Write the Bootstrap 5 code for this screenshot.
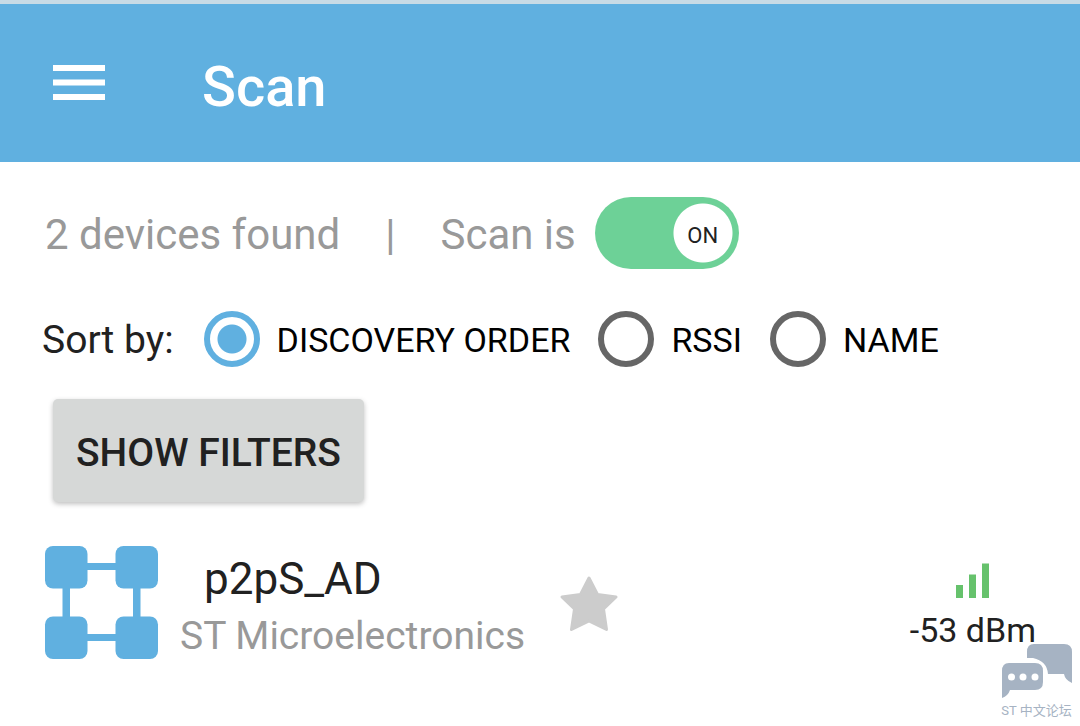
<!DOCTYPE html>
<html lang="en">
<head>
<meta charset="utf-8">
<meta name="viewport" content="width=device-width, initial-scale=1">
<title>Scan</title>
<link href="https://cdn.jsdelivr.net/npm/bootstrap@5.3.0/dist/css/bootstrap.min.css" rel="stylesheet">
<style>
  :root { --scan-blue: #60b0e0; --scan-ink: #212121; --scan-grey: #999; }
  body { font-family: Roboto, "Noto Sans CJK SC", sans-serif; color: var(--scan-ink); background: #fff; }
  .app-bar { background: var(--scan-blue); border-top: 4px solid #c8dbe6; padding: 34px 52px 26px; gap: 96px; }
  .app-title { font-size: 56px; line-height: 98px; font-weight: 500; }
  .menu-btn svg, .device svg, .forum svg { display: block; }
  .screen { padding: 35px 44px 0 42px; }
  .status-row { padding-left: 3px; font-size: 42px; line-height: 72px; color: var(--scan-grey); }
  .status-row > span, .status-row > label { padding-top: 2px; margin-bottom: -2px; }
  .status-row .divider { padding-left: 45px; padding-right: 45px; }
  .scan-switch { width: 144px; height: 72px; margin-left: 19px; }
  .scan-switch .form-check-input {
    width: 144px; height: 72px; margin: 0; border: 0; border-radius: 36px; background-color: #ccc;
    background-image: radial-gradient(circle at 36px 36px, #fff 29px, transparent 30px);
    background-size: 100% 100%; background-position: 0 0;
  }
  .scan-switch .form-check-input:checked {
    background-color: #6dd197;
    background-image: radial-gradient(circle at 108px 36px, #fff 29px, transparent 30px);
  }
  .scan-switch .state { right: 6px; top: 6px; width: 60px; font-size: 22px; line-height: 66px; color: var(--scan-ink); pointer-events: none; }
  .sort-row { margin-top: 41px; gap: 28px; line-height: 56px; }
  .sort-title { font-size: 39px; padding-top: 1px; padding-right: 2px; }
  .sort-option { font-size: 34px; color: #000; gap: 17px; }
  .sort-option label { padding-top: 2px; }
  .sort-option .form-check-input { width: 56px; height: 56px; margin: 0; border: 6px solid #666; background-color: #fff; }
  .sort-option .form-check-input:checked {
    border-color: var(--scan-blue);
    background-image: radial-gradient(circle, var(--scan-blue) 14px, transparent 15px);
  }
  .filter-btn { margin: 31px 0 0 11px; padding: 5px 23px 0; border: 0; border-radius: 5px; background: #d6d8d7; color: var(--scan-ink);
    font-size: 39px; line-height: 98px; font-weight: 500; box-shadow: 0 2px 5px rgba(0, 0, 0, .25); }
  .device { margin-top: 43px; padding-left: 2px; }
  .device-name { font-size: 44px; line-height: 58px; padding-left: 24px; font-weight: 400; }
  .device-maker { font-size: 39px; line-height: 56px; color: var(--scan-grey); }
  .device-text { margin-left: 21px; margin-top: 5px; }
  .star-btn { margin-left: 34px; margin-top: 28px; }
  .signal { margin-top: 17px; font-size: 34px; line-height: 40px; }
  .signal svg { margin-bottom: 12px; }
  .forum { right: 8px; bottom: 5px; color: #a6b3c3; font-size: 13px; line-height: 20px; }
  .forum svg { margin-bottom: 2px; }
</style>
</head>
<body class="min-vh-100 position-relative">
<header class="app-bar d-flex align-items-center text-white">
  <button type="button" class="menu-btn btn p-0 border-0 rounded-0" aria-label="Menu">
    <svg width="54" height="44" viewBox="0 0 54 44" fill="#fff"><path d="M1 0h52v6H1zM1 14.500h52v6H1zM1 29h52v6H1z"/></svg>
  </button>
  <h1 class="app-title m-0">Scan</h1>
</header>

<main class="screen">
  <div class="status-row d-flex align-items-center">
    <span>2 devices found</span>
    <span class="divider">|</span>
    <label for="scanSwitch">Scan is</label>
    <div class="scan-switch form-switch p-0 position-relative">
      <input class="form-check-input float-none d-block" type="checkbox" role="switch" id="scanSwitch" checked>
      <span class="state position-absolute text-center">ON</span>
    </div>
  </div>

  <div class="sort-row d-flex align-items-center" role="radiogroup" aria-labelledby="sortTitle">
    <span class="sort-title" id="sortTitle">Sort by:</span>
    <div class="sort-option d-flex align-items-center">
      <input class="form-check-input" type="radio" name="sort" id="sortDiscovery" checked>
      <label for="sortDiscovery">DISCOVERY ORDER</label>
    </div>
    <div class="sort-option d-flex align-items-center">
      <input class="form-check-input" type="radio" name="sort" id="sortRssi">
      <label for="sortRssi">RSSI</label>
    </div>
    <div class="sort-option d-flex align-items-center">
      <input class="form-check-input" type="radio" name="sort" id="sortName">
      <label for="sortName">NAME</label>
    </div>
  </div>

  <button type="button" class="filter-btn btn d-block">SHOW FILTERS</button>

  <section class="device d-flex align-items-start">
    <svg width="115" height="115" viewBox="0 0 115 115" fill="#60b0e0" aria-hidden="true">
      <path d="M40 18h34v7H40zM40 89h34v7H40zM18.500 40h7.500v34h-7.500zM89 40h7.500v34H89z"/>
      <rect x="1" y="1" width="42.500" height="42.500" rx="8"/><rect x="71.500" y="1" width="42.500" height="42.500" rx="8"/>
      <rect x="1" y="71.500" width="42.500" height="42.500" rx="8"/><rect x="71.500" y="71.500" width="42.500" height="42.500" rx="8"/>
    </svg>
    <div class="device-text">
      <h2 class="device-name m-0">p2pS_AD</h2>
      <div class="device-maker">ST Microelectronics</div>
    </div>
    <button type="button" class="star-btn btn p-0 border-0" aria-label="Favourite">
      <svg width="60" height="60" viewBox="0 0 60 60" fill="#ccc" stroke="#ccc" stroke-width="3" stroke-linejoin="round"><path d="M30 5l8.500 16.500L57 24 44.500 36l3 20.500L30 48 12.500 56.500 15.500 36 3 24l18.500-2.500z"/></svg>
    </button>
    <div class="signal ms-auto d-flex flex-column align-items-center">
      <svg width="34" height="36" viewBox="0 0 34 36" fill="#66c26c" aria-hidden="true"><path d="M0 23h7v13H0zM13 12.500h7V36h-7zM26 1.500h7V36h-7z"/></svg>
      <span>-53 dBm</span>
    </div>
  </section>
</main>

<aside class="forum position-absolute d-flex flex-column align-items-center">
  <svg width="71" height="56" viewBox="0 0 71 56" aria-hidden="true">
    <path fill="#a6b3c3" d="M33 1h30q8 0 8 8v31q-7-3-8-9H47q-1-13-15-16h-6V9q0-8 7-8z"/>
    <path fill="#a6b3c3" d="M8 20h26q8 0 8 8v11q0 8-8 8H9q-2 6-8 8V28q0-8 7-8z"/>
    <g fill="#fff"><circle cx="10.500" cy="34" r="3.500"/><circle cx="22" cy="34" r="3.500"/><circle cx="34" cy="34" r="3.500"/></g>
  </svg>
  <span>ST 中文论坛</span>
</aside>
<script src="https://cdn.jsdelivr.net/npm/bootstrap@5.3.0/dist/js/bootstrap.bundle.min.js"></script>
</body>
</html>
